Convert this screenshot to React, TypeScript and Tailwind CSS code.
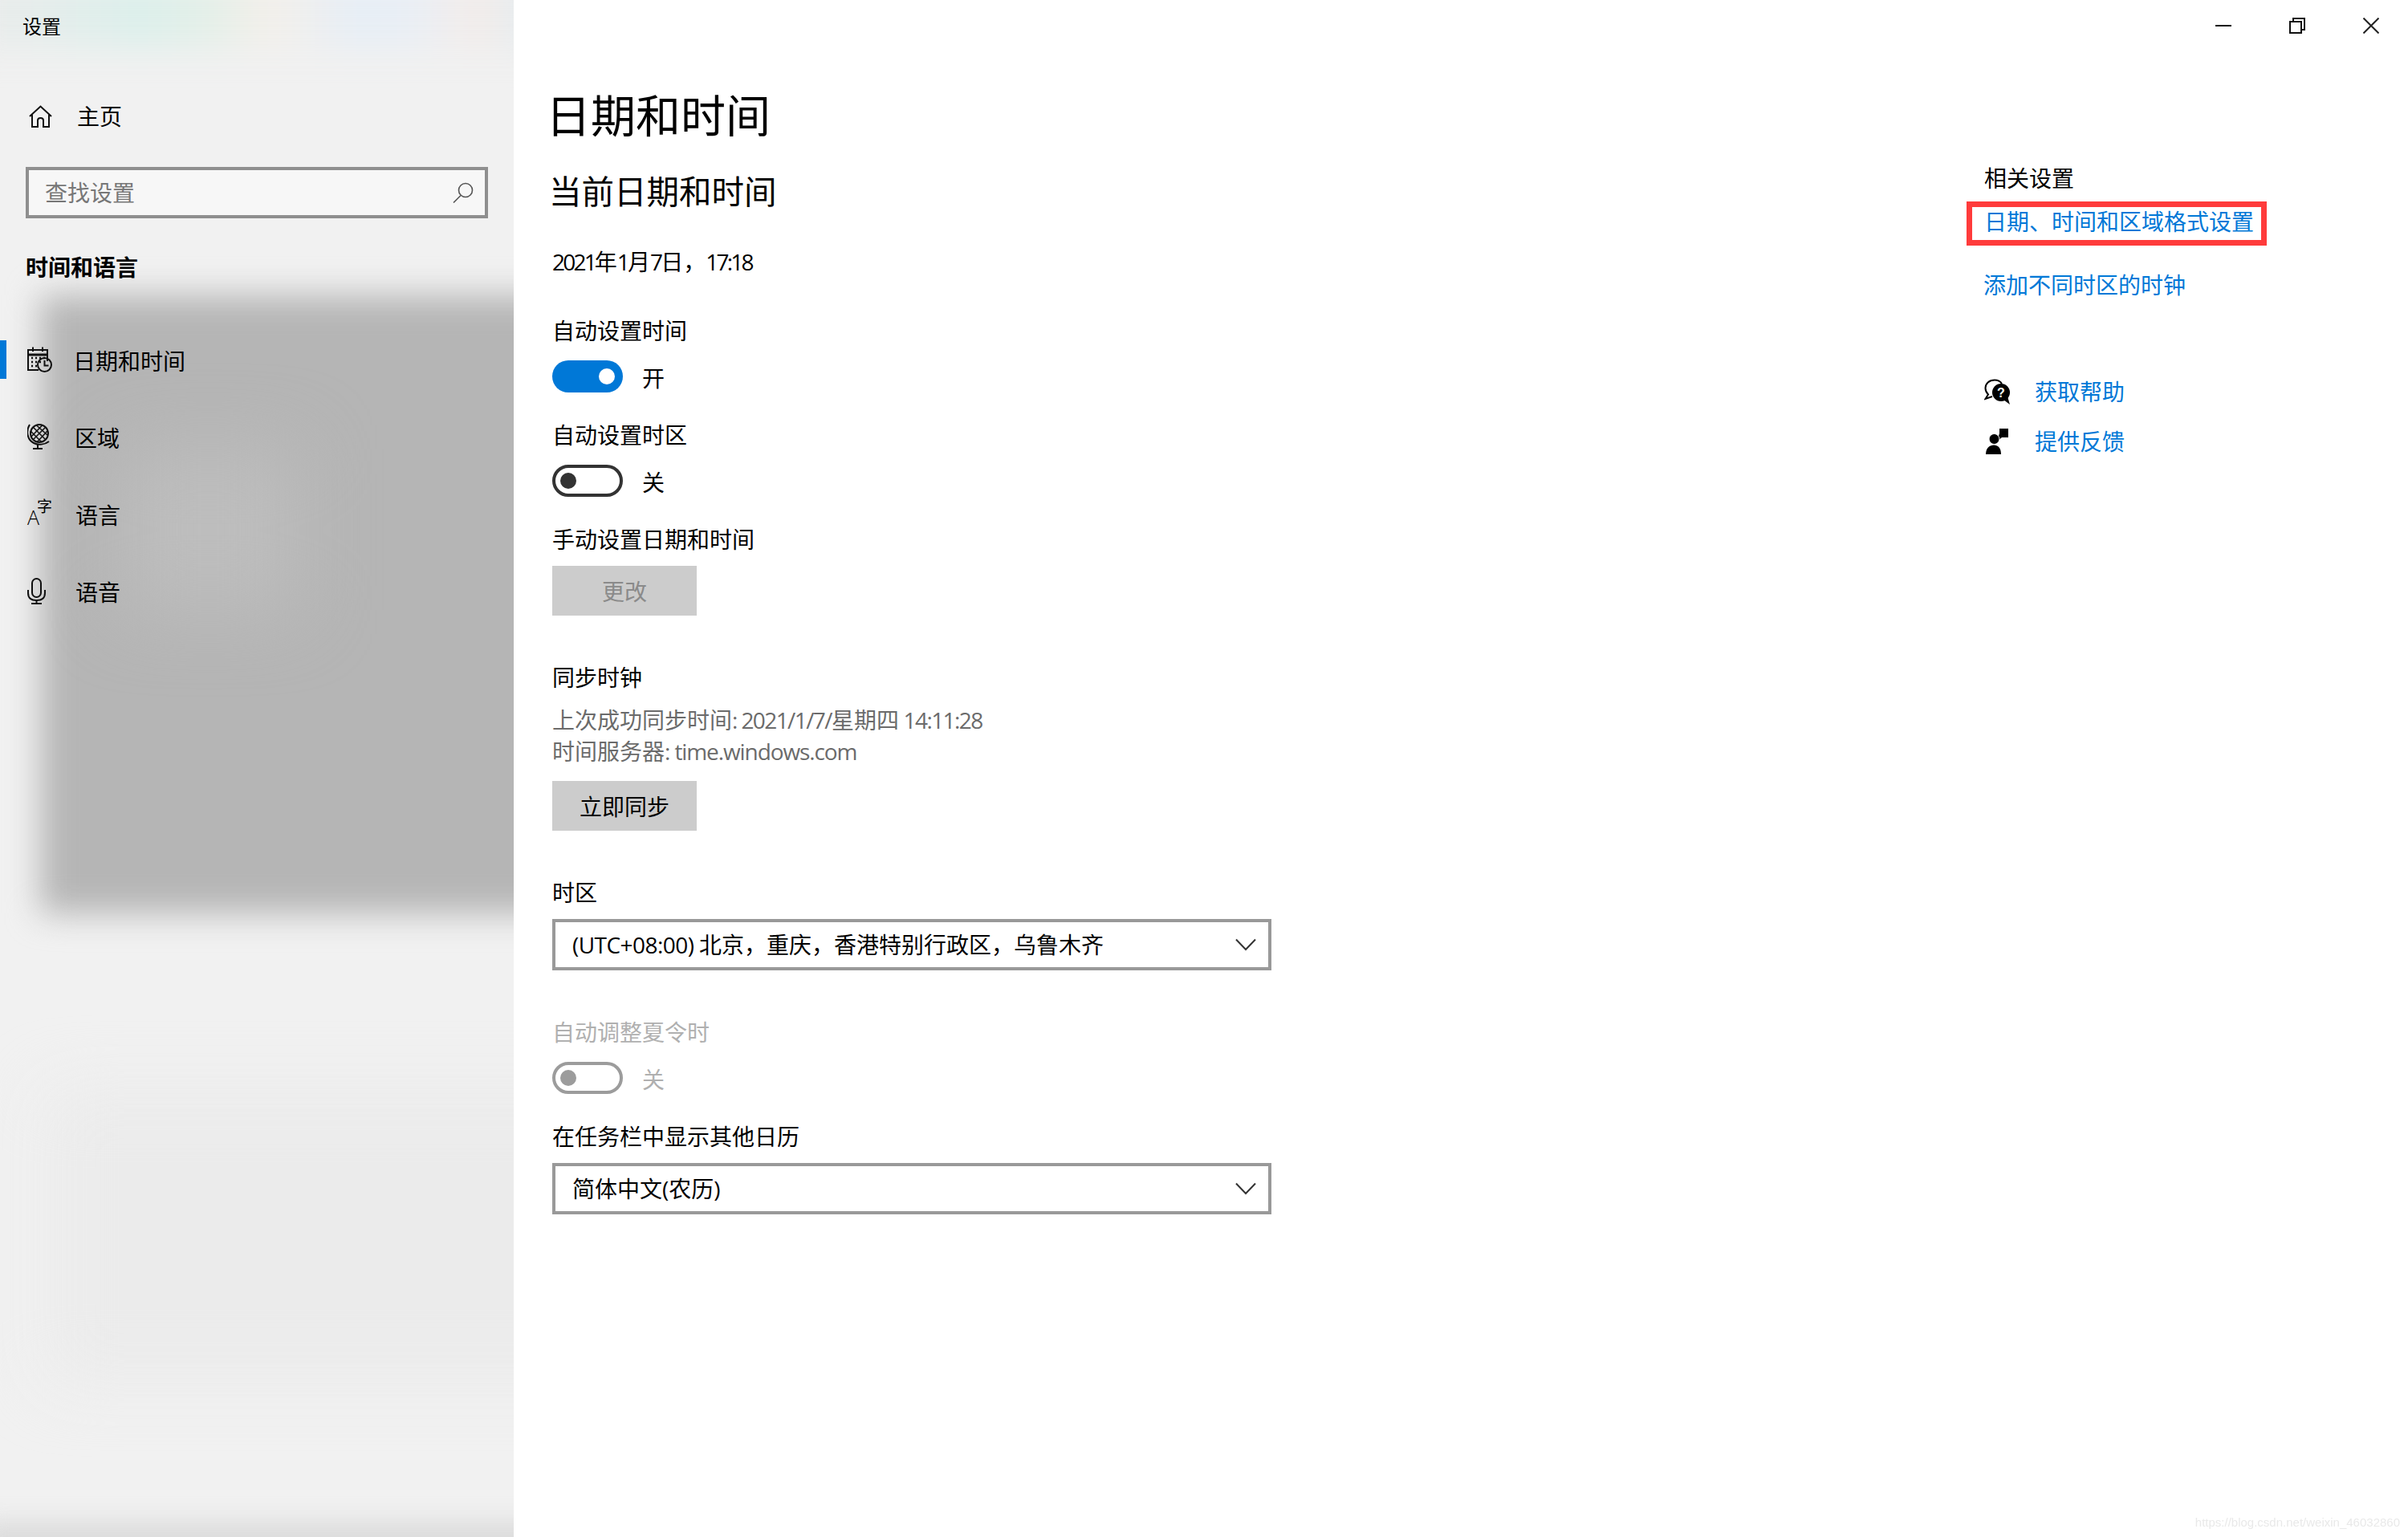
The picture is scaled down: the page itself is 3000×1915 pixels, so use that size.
const font = "font-['Open_Sans','Noto_Sans_CJK_SC',sans-serif]";

function Toggle({ state }: { state: 'on' | 'off' | 'disabled' }) {
  if (state === 'on') {
    return (
      <div className="flex items-center">
        <div className="flex h-[40px] w-[88px] items-center justify-end rounded-full bg-[#0078d7] pr-[10px]">
          <div className="h-[20px] w-[20px] rounded-full bg-white" />
        </div>
        <span className="ml-[24px] translate-y-[2px] text-[28px] leading-[40px] text-black">开</span>
      </div>
    );
  }
  const disabled = state === 'disabled';
  return (
    <div className="flex items-center">
      <div
        className={
          disabled
            ? 'flex h-[40px] w-[88px] items-center rounded-full border-4 border-[#9c9c9c] pl-[6px]'
            : 'flex h-[40px] w-[88px] items-center rounded-full border-4 border-[#333333] pl-[6px]'
        }
      >
        <div className={disabled ? 'h-[20px] w-[20px] rounded-full bg-[#9c9c9c]' : 'h-[20px] w-[20px] rounded-full bg-[#333333]'} />
      </div>
      <span className={disabled ? 'ml-[24px] translate-y-[2px] text-[28px] leading-[40px] text-[#b0b0b0]' : 'ml-[24px] translate-y-[2px] text-[28px] leading-[40px] text-black'}>关</span>
    </div>
  );
}

function Select({ children, className }: { children: React.ReactNode; className: string }) {
  return (
    <div className={`flex h-[64px] w-[896px] items-center justify-between border-4 border-[#999999] bg-white pl-[21px] pr-[15px] ${className}`}>
      <span className="text-[28px] leading-[40px] text-black">{children}</span>
      <svg width="26" height="16" viewBox="0 0 26 16" fill="none" stroke="#333" strokeWidth="2">
        <path d="M1 1.5 L13 14 L25 1.5" />
      </svg>
    </div>
  );
}

function NavRow({ active, icon, label, textClass }: { active?: boolean; icon: React.ReactNode; label: string; textClass: string }) {
  return (
    <div className="flex h-[96px] items-center">
      <div className={active ? 'h-[48px] w-[8px] bg-[#0078d7]' : 'h-[48px] w-[8px]'} />
      <div className="ml-[26px] flex h-[34px] w-[32px] items-center justify-start">{icon}</div>
      <span className={`translate-y-[2px] text-[28px] leading-[40px] text-black ${textClass}`}>{label}</span>
    </div>
  );
}

const CalendarIcon = (
  <svg width="31" height="32" viewBox="0 0 31 32" fill="none" stroke="#111" strokeWidth="2">
    <path d="M25 18 V4 H1 V29 H14" />
    <path d="M1 10 H25" strokeWidth="3" />
    <path d="M7 0.5 V6 M19 0.5 V6" />
    <path d="M5 14 h2 M10 14 h2 M15 14 h2 M20 14 h2 M5 19 h2 M10 19 h2 M15 19 h2 M5 24 h2 M10 24 h2" strokeWidth="2.5" />
    <circle cx="21.5" cy="22.5" r="8.5" />
    <path d="M21.5 17 V23.5 H26.5" />
  </svg>
);

const GlobeIcon = (
  <svg width="29" height="32" viewBox="0 0 29 32" fill="none" stroke="#111" strokeWidth="2">
    <circle cx="15" cy="12" r="11" />
    <path d="M7 4 L23 20 M23 4 L7 20 M11 1.5 L25 14 M4 9 L18 23 M19 1.5 L5 16 M25 9 L12 23" strokeWidth="1.6" />
    <path d="M3 1 C-2 9 0 20 8 24 C14 27 22 26 27 22" />
    <path d="M13 26 V31 M7 31 H19" />
  </svg>
);

const MicIcon = (
  <svg width="23" height="33" viewBox="0 0 23 33" fill="none" stroke="#111" strokeWidth="2">
    <rect x="6" y="1" width="11" height="23" rx="5.5" />
    <path d="M1 15 V19 C1 25 5 28 11.5 28 C18 28 22 25 22 19 V15" />
    <path d="M11.5 28 V32 M5 32 H18" />
  </svg>
);

export default function App() {
  return (
    <div className={`flex min-h-[1915px] w-[3000px] bg-white ${font}`}>
      <aside className="relative flex h-[1915px] w-[640px] shrink-0 flex-col overflow-hidden bg-[#f1f1f1]">
        <div className="absolute -left-[40px] -top-[30px] h-[90px] w-[720px] bg-[linear-gradient(90deg,#ebebeb_0%,#dcefeb_30%,#e4efe8_42%,#f3efea_52%,#e6eef6_68%,#eaeef4_78%,#f3ece9_88%,#e0ecf2_100%)] blur-[20px]" />
        <div className="absolute left-[50px] top-[368px] h-[770px] w-[720px] bg-[#b5b5b5] blur-[20px]" />
        <div className="absolute left-[150px] top-[560px] h-[200px] w-[220px] bg-[#bdbdbd] blur-[45px]" />
        <div className="absolute left-[60px] top-[1360px] h-[360px] w-[700px] bg-[#ebebeb] blur-[40px]" />
        <div className="absolute -left-[20px] top-[1895px] h-[60px] w-[700px] bg-[#dcdcdc] blur-[14px]" />

        <div className="relative flex h-[1915px] flex-col">
          <div className="h-[68px] pl-[28px] text-[24px] leading-[66px] text-black">设置</div>
          <div className="mt-[29px] flex h-[96px] items-center pl-[36px]">
            <svg width="29" height="28" viewBox="0 0 29 28" fill="none" stroke="#111" strokeWidth="2">
              <path d="M1 14 L14.5 1.5 L28 14" />
              <path d="M4 11.5 V27 H11 V19 C11 15 18 15 18 19 V27 H25 V11.5" />
            </svg>
            <span className="ml-[31px] text-[28px] leading-[40px] text-black">主页</span>
          </div>
          <div className="ml-[32px] mt-[15px] flex h-[64px] w-[576px] items-center justify-between border-4 border-[#8f8f8f] bg-[#f7f7f7] pl-[20px] pr-[14px]">
            <span className="text-[28px] leading-[40px] text-[#777777]">查找设置</span>
            <svg width="26" height="26" viewBox="0 0 26 26" fill="none" stroke="#555" strokeWidth="1.6">
              <circle cx="16" cy="10" r="8.5" />
              <path d="M10 16.5 L1 25.5" />
            </svg>
          </div>
          <div className="ml-[32px] mt-[41px] text-[28px] font-bold leading-[40px] text-black">时间和语言</div>
          <div className="mt-[47px] flex flex-col">
            <NavRow active icon={CalendarIcon} label="日期和时间" textClass="ml-[25px]" />
            <NavRow icon={GlobeIcon} label="区域" textClass="ml-[27px]" />
            <NavRow
              icon={
                <span className="flex items-start leading-none text-black">
                  <span className="mt-[8px] text-[25px] font-light">A</span>
                  <span className="-ml-[3px] -mt-[2px] text-[19px]">字</span>
                </span>
              }
              label="语言"
              textClass="ml-[28px]"
            />
            <NavRow icon={MicIcon} label="语音" textClass="ml-[28px]" />
          </div>
        </div>
      </aside>

      <main className="relative flex h-[1915px] flex-1 flex-col">
        <div className="flex h-[64px] justify-end">
          <div className="flex h-[64px] w-[92px] items-center justify-center">
            <svg width="20" height="2" viewBox="0 0 20 2"><path d="M0 1 H20" stroke="#111" strokeWidth="2" /></svg>
          </div>
          <div className="flex h-[64px] w-[92px] items-center justify-center">
            <svg width="20" height="20" viewBox="0 0 20 20" fill="none" stroke="#111" strokeWidth="2">
              <rect x="1" y="5" width="14" height="14" />
              <path d="M5 5 V1 H19 V15 H15" />
            </svg>
          </div>
          <div className="flex h-[64px] w-[92px] items-center justify-center">
            <svg width="20" height="20" viewBox="0 0 20 20" fill="none" stroke="#222" strokeWidth="2">
              <path d="M0.5 0.5 L19.5 19.5 M19.5 0.5 L0.5 19.5" />
            </svg>
          </div>
        </div>

        <div className="flex flex-1 justify-between pl-[48px]">
          <div className="flex flex-col pt-[41px] text-[28px] leading-[40px] text-black">
            <h1 className="-ml-[8px] text-[56px] font-normal leading-[76px]">日期和时间</h1>
            <h2 className="-ml-[4px] mt-[30px] text-[40.5px] font-normal leading-[56px]">当前日期和时间</h2>
            <div className="mt-[39px]">
              <span className="tracking-[-2.8px]">2021</span>年<span className="tracking-[-2.8px]">1</span>月<span className="tracking-[-2.8px]">7</span>日，<span className="tracking-[-2.8px]">17:18</span>
            </div>
            <div className="mt-[46px]">自动设置时间</div>
            <div className="mt-[17px]"><Toggle state="on" /></div>
            <div className="mt-[33px]">自动设置时区</div>
            <div className="mt-[17px]"><Toggle state="off" /></div>
            <div className="mt-[33px]">手动设置日期和时间</div>
            <div className="mt-[13px] flex h-[62px] w-[180px] items-center justify-center bg-[#cccccc] pt-[2px] text-[#8a8a8a]">更改</div>
            <div className="mt-[57px]">同步时钟</div>
            <div className="mt-[14px] h-[39px] leading-[39px] text-[#6b6b6b]">
              上次成功同步时间<span className="tracking-[-1.6px]">: 2021/1/7/</span>星期四<span className="tracking-[-1.6px]"> 14:11:28</span>
            </div>
            <div className="h-[39px] leading-[39px] text-[#6b6b6b]">
              时间服务器<span className="tracking-[-1.1px]">: time.windows.com</span>
            </div>
            <div className="mt-[17px] flex h-[62px] w-[180px] items-center justify-center bg-[#cccccc] pt-[2px]">立即同步</div>
            <div className="mt-[57px]">时区</div>
            <Select className="mt-[13px]">
              <span className="tracking-[-0.55px]">(UTC+08:00) </span>北京，重庆，香港特别行政区，乌鲁木齐
            </Select>
            <div className="mt-[57px] text-[#b0b0b0]">自动调整夏令时</div>
            <div className="mt-[17px]"><Toggle state="disabled" /></div>
            <div className="mt-[33px]">在任务栏中显示其他日历</div>
            <Select className="mt-[13px]">简体中文(农历)</Select>
          </div>

          <div className="flex w-[528px] flex-col pt-[138px] text-[28px] leading-[40px] text-[#0078d7]">
            <div className="text-black">相关设置</div>
            <div className="-ml-[22px] mt-[9px] flex h-[55px] w-[374px] items-center border-[7px] border-[#ff3b3b] pb-[5px] pl-[15px]">日期、时间和区域格式设置</div>
            <div className="mt-[29px] -ml-[1px]">添加不同时区的时钟</div>
            <div className="mt-[93px] flex items-center">
              <svg width="32" height="32" viewBox="0 0 32 32" className="shrink-0">
                <path d="M13 1.5 C6 1.5 1.5 6 1.5 11.5 C1.5 15 3 17.5 5 19.5 L1.5 25 L10 22" fill="none" stroke="#000" strokeWidth="2" />
                <path d="M13 1.5 C17 1.5 20 3 22 6" fill="none" stroke="#000" strokeWidth="2" />
                <circle cx="21" cy="17" r="11" fill="#000" />
                <path d="M24 26 L32 32 L29 22 Z" fill="#000" />
                <text x="21" y="23" textAnchor="middle" fontSize="16" fontWeight="700" fill="#fff" fontFamily="Liberation Sans">?</text>
              </svg>
              <span className="ml-[31px]">获取帮助</span>
            </div>
            <div className="mt-[22px] flex items-center">
              <svg width="32" height="32" viewBox="0 0 32 32" className="shrink-0">
                <path d="M19 0 H30 V11 H22 L16 16 L19 6 Z" fill="#000" />
                <circle cx="12.5" cy="13" r="6.5" fill="#000" stroke="#fff" strokeWidth="1" />
                <path d="M2 32 C2 24 7 20.5 12 20.5 C17 20.5 21 24 21 32 Z" fill="#000" />
              </svg>
              <span className="ml-[31px]">提供反馈</span>
            </div>
          </div>
        </div>

        <div className="absolute bottom-[9px] right-[10px] font-['Liberation_Sans',sans-serif] text-[15px] leading-[18px] text-[#e9e9e9] blur-[0.5px]">
          https://blog.csdn.net/weixin_46032860
        </div>
      </main>
    </div>
  );
}
